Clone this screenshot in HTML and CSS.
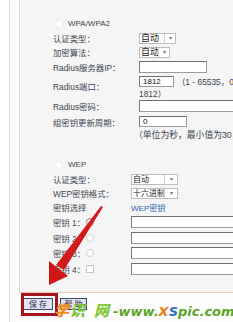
FILE: index.html
```html
<!DOCTYPE html>
<html lang="zh">
<head>
<meta charset="utf-8">
<title>无线安全设置</title>
<link rel="stylesheet" href="styles.css">
</head>
<body>
<div class="frame">
  <div class="panel">
    <div class="sec wpa">
      <div class="row radio-row"><span class="radio faint"></span><span>WPA/WPA2</span></div>
      <div class="row"><span class="lab">认证类型：</span><span class="sel s1"><span class="sel-t">自动</span><span class="sel-a">▾</span></span></div>
      <div class="row"><span class="lab">加密算法：</span><span class="sel s2"><span class="sel-t">自动</span><span class="sel-a">▾</span></span></div>
      <div class="row r15"><span class="lab">Radius服务器IP：</span><span class="inp w-ip"></span></div>
      <div class="row r24"><span class="lab">Radius端口：</span>
        <div class="col">
          <div class="line1"><span class="inp w-port inp11">1812</span><span class="note">（1 - 65535，0 表示默认端口：</span></div>
          <div class="line2"><span class="note">1812）</span></div>
        </div>
      </div>
      <div class="row r16"><span class="lab">Radius密码：</span><span class="inp w-long"></span></div>
      <div class="row r15"><span class="lab">组密钥更新周期：</span><span class="inp w-grp inp11">0</span></div>
      <div class="row r11"><span class="lab"></span><span class="note big shift">（单位为秒，最小值为30，不更新则为0）</span></div>
    </div>
    <div class="sec wep">
      <div class="row radio-row"><span class="radio faint"></span><span>WEP</span></div>
      <div class="row"><span class="lab">认证类型：</span><span class="sel s3"><span class="sel-t">自动</span><span class="sel-a">▾</span></span></div>
      <div class="row"><span class="lab">WEP密钥格式：</span><span class="sel s3"><span class="sel-t">十六进制</span><span class="sel-a">▾</span></span></div>
      <div class="row"><span class="lab">密钥选择</span><span class="blue">WEP密钥</span></div>
      <div class="row r16"><span class="lab klab"><span class="kname">密钥 1：</span><span class="radio dark"></span></span><span class="inp w-long"></span></div>
      <div class="row r15"><span class="lab klab"><span class="kname">密钥 2：</span><span class="radio"></span></span><span class="inp w-long"></span></div>
      <div class="row r16"><span class="lab klab"><span class="kname">密钥 3：</span><span class="radio"></span></span><span class="inp w-long"></span></div>
      <div class="row r15"><span class="lab klab"><span class="kname">密钥 4：</span><span class="box"></span></span><span class="inp w-long"></span></div>
    </div>
  </div>
  <div class="actions">
    <button class="btn b-save">保 存</button>
    <button class="btn b-help">帮 助</button>
  </div>
</div>
<div class="mark-box"></div>
<svg class="arrow" width="233" height="322" viewBox="0 0 233 322">
  <defs>
    <linearGradient id="ag" x1="0" y1="0" x2="1" y2="1">
      <stop offset="0" stop-color="#e42424"/>
      <stop offset="1" stop-color="#c01212"/>
    </linearGradient>
  </defs>
  <polygon points="101,206 103,207 64,270 56,265" fill="url(#ag)"/>
  <polygon points="49,285 49,261 68,276" fill="#d01616"/>
</svg>
<div class="watermark">
  <span class="wm-c o">学</span><span class="wm-c g1">识</span><span class="wm-c g2">网</span><span class="wm-url">-www.<span class="xo">X</span><span class="sb">S</span>pic.com</span>
</div>
</body>
</html>
```
FILE: styles.css
```css
html, body {
  margin: 0;
  padding: 0;
  overflow: hidden;
  background: #ffffff;
}
body {
  width: 233px;
  height: 322px;
  position: relative;
  font-family: "Liberation Sans", "Noto Sans CJK SC", sans-serif;
  font-size: 8px;
  color: #3c4650;
}
.frame {
  margin-left: 9px;
  border-left: 1px solid #dedede;
  padding-left: 9px;
  height: 322px;
  box-sizing: border-box;
  background: #fcfcfc;
}
.panel {
  width: 420px;
  height: 293px;
  box-sizing: border-box;
  border-left: 1px solid #e6dcbc;
  border-bottom: 1px solid #f0c6b4;
  background: #f5f5f5;
  padding-left: 33px;
  padding-top: 16px;
}
.sec.wep { margin-top: 17px; }
.row {
  display: flex;
  align-items: center;
  height: 14px;
  white-space: nowrap;
}
.radio-row { height: 15px; }
.r11 { height: 11px; }
.r15 { height: 15px; }
.r16 { height: 16px; }
.r24 { height: 24px; }
.lab {
  width: 86px;
  flex: none;
  display: flex;
  align-items: center;
  font-size: 8.4px;
}
.wep .lab { width: 78px; }
.klab .kname { width: 33px; }
.radio {
  width: 8px;
  height: 8px;
  box-sizing: border-box;
  border-radius: 50%;
  background: #fff;
  border: 1px solid #cfcfcf;
  flex: none;
}
.radio-row .radio { margin-left: 2px; margin-right: 5px; }
.radio.faint { border-color: #ececec; }
.radio.dark { border-color: #8a8a8a; }
.box {
  width: 8px;
  height: 8px;
  box-sizing: border-box;
  background: #fff;
  border: 1px solid #c4c4c4;
  flex: none;
}
.sel {
  display: inline-flex;
  height: 11px;
  box-sizing: border-box;
  border: 1px solid #bdbdbd;
  background: #fff;
  color: #222;
  font-size: 9px;
  line-height: 9px;
}
.sel-t { padding-left: 1px; flex: none; }
.sel-a {
  border-left: 1px solid #d0d0d0;
  color: #777;
  font-size: 6px;
  text-align: center;
  flex: none;
}
.s1 .sel-t { width: 23px; }
.s1 .sel-a { width: 10px; }
.s2 .sel-t { width: 17px; }
.s2 .sel-a { width: 10px; }
.s3 .sel-t { width: 31px; font-size: 8px; }
.s3 .sel-a { width: 12px; }
.inp {
  display: inline-block;
  height: 12px;
  box-sizing: border-box;
  border: 1px solid #9a9a9a;
  border-top-color: #6e6e6e;
  border-left-color: #7a7a7a;
  background: #fff;
  color: #111;
  font-size: 8px;
  line-height: 10px;
  padding: 0 3px;
  flex: none;
}
.inp11 { height: 11px; line-height: 9px; }
.w-ip { width: 68px; }
.w-port { width: 35px; }
.w-grp { width: 48px; }
.w-long { width: 200px; }
.col {
  display: flex;
  flex-direction: column;
  align-self: stretch;
}
.line1 {
  display: flex;
  align-items: center;
  height: 13px;
  margin-top: 1px;
}
.line1 .note { margin-left: 3px; }
.line2 {
  height: 11px;
  display: flex;
  align-items: center;
}
.note { color: #3c4650; font-size: 8.4px; }
.note.big { font-size: 8.8px; }
.shift { margin-left: -5px; }
.blue { color: #2f62b2; }
.actions {
  display: flex;
  gap: 7px;
  padding-left: 4px;
  padding-top: 5px;
}
.btn {
  margin: 0;
  padding: 0;
  height: 12px;
  box-sizing: border-box;
  border: 1px solid #3a4670;
  background: #e2e2ee;
  color: #1e2a50;
  font-family: "Noto Sans CJK SC", sans-serif;
  font-size: 8px;
  line-height: 10px;
}
.b-save { width: 30px; }
.b-help { width: 27px; }
.mark-box {
  position: absolute;
  left: 21px;
  top: 293px;
  width: 37px;
  height: 23px;
  box-sizing: border-box;
  border: 3px solid #a3161c;
}
.arrow {
  position: absolute;
  left: 0;
  top: 0;
}
.watermark {
  position: absolute;
  left: 54px;
  top: 300px;
  display: flex;
  align-items: baseline;
  white-space: nowrap;
}
.wm-c {
  font-family: "Noto Sans CJK SC", sans-serif;
  font-weight: 900;
  font-size: 15px;
  font-style: italic;
  line-height: 20px;
}
.wm-c.o { color: #f08a1c; margin-right: 1px; }
.wm-c.g1 { color: #7cc23a; margin-right: 9px; }
.wm-c.g2 { color: #86c83c; }
.wm-url {
  font-family: "DejaVu Sans", sans-serif;
  font-weight: bold;
  font-style: italic;
  font-size: 13px;
  color: #5da42a;
  margin-left: 4px;
}
.xo { color: #f07a18; }
.sb { color: #2a6cc0; }
```
